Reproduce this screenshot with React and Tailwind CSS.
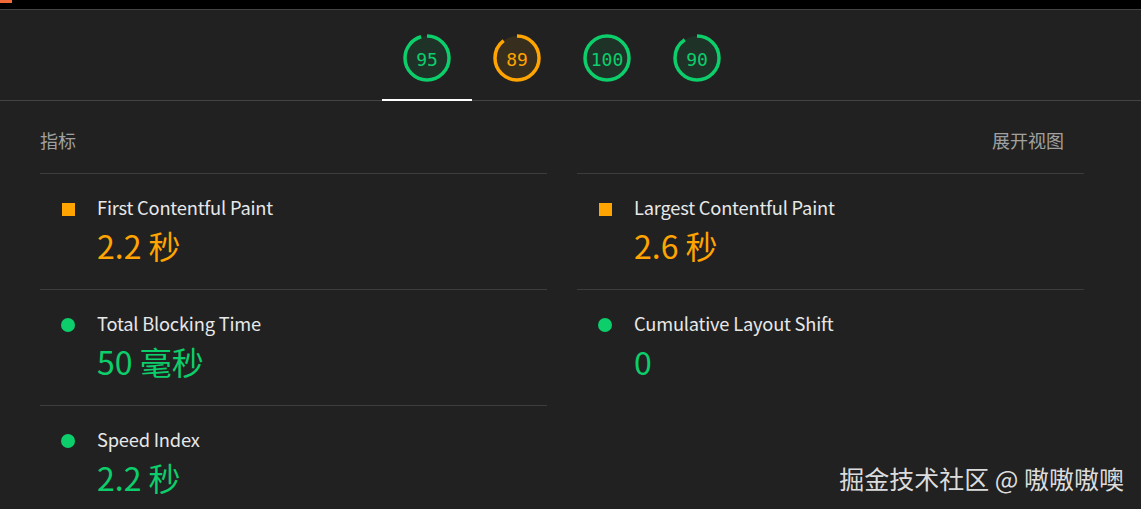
import React from "react";

const GREEN = "#0cce6b";
const ORANGE = "#ffa400";

function Gauge({ score, color, fill }) {
  const r = 22;
  const c = 2 * Math.PI * r;
  const pct = score / 100;
  return (
    <div className="w-[90px] flex justify-center items-center">
      <div className="relative w-[50px] h-[50px]">
        <svg width="50" height="50" viewBox="0 0 50 50" className="absolute inset-0">
          <circle cx="25" cy="25" r={r} fill={fill} />
          <circle
            cx="25"
            cy="25"
            r={r}
            fill="none"
            stroke={color}
            strokeWidth="3.5"
            strokeDasharray={`${c * pct} ${c}`}
            transform="rotate(-90 25 25)"
          />
        </svg>
        <div
          className="absolute inset-0 flex items-center justify-center text-[18px] pt-[2px]"
          style={{ color, fontFamily: '"DejaVu Sans Mono", monospace' }}
        >
          {score}
        </div>
      </div>
    </div>
  );
}

function Metric({ icon, title, value, color }) {
  return (
    <div className="border-t border-[#3c3c3c] h-[116px] pt-[20px] pl-[21px] flex">
      <div className="w-[36px] flex pt-[9px]">
        {icon === "square" ? (
          <div className="w-[13px] h-[13px] ml-[1px]" style={{ background: color }} />
        ) : (
          <div className="w-[14px] h-[14px] rounded-full mt-[-1px]" style={{ background: color }} />
        )}
      </div>
      <div className="flex flex-col">
        <div className="text-[18.3px] leading-[26px] text-[#e8e8e8] tracking-[-0.2px]">{title}</div>
        <div className="text-[32px] leading-[40px] mt-[5px]" style={{ color }}>
          {value}
        </div>
      </div>
    </div>
  );
}

export default function App() {
  return (
    <div
      className="w-[1141px] h-[509px] bg-[#212121] overflow-hidden relative"
      style={{ fontFamily: '"Noto Sans CJK SC", "Noto Sans", sans-serif' }}
    >
      <div className="h-[9px] bg-black relative">
        <div className="w-[12px] h-[3px] bg-[#f06a3a]" />
      </div>
      <div className="h-[1px] bg-[#444]" />
      <div className="h-[91px] border-b border-[#444] flex items-start pt-[23px] pl-[382px] relative">
        <div className="flex">
          <Gauge score={95} color={GREEN} fill="rgba(12,206,107,0.1)" />
          <Gauge score={89} color={ORANGE} fill="rgba(255,164,0,0.1)" />
          <Gauge score={100} color={GREEN} fill="rgba(12,206,107,0.1)" />
          <Gauge score={90} color={GREEN} fill="rgba(12,206,107,0.1)" />
        </div>
        <div className="absolute left-[382px] bottom-[-1px] w-[90px] h-[2px] bg-white" />
      </div>
      <div className="px-[40px] w-[1124px]">
        <div className="flex justify-between items-center h-[72px] pt-[7px] pr-[20px] text-[18px] text-[#a0a0a0]">
          <span>指标</span>
          <span>展开视图</span>
        </div>
        <div className="grid grid-cols-2 gap-x-[30px]">
          <Metric icon="square" title="First Contentful Paint" value="2.2 秒" color={ORANGE} />
          <Metric icon="square" title="Largest Contentful Paint" value="2.6 秒" color={ORANGE} />
          <Metric icon="circle" title="Total Blocking Time" value="50 毫秒" color={GREEN} />
          <Metric icon="circle" title="Cumulative Layout Shift" value="0" color={GREEN} />
          <Metric icon="circle" title="Speed Index" value="2.2 秒" color={GREEN} />
          <div />
        </div>
      </div>
      <div className="absolute right-[17px] bottom-[14px] text-[25px] leading-[34px] text-[#dcdcdc]">
        掘金技术社区 @ 嗷嗷嗷噢
      </div>
    </div>
  );
}
